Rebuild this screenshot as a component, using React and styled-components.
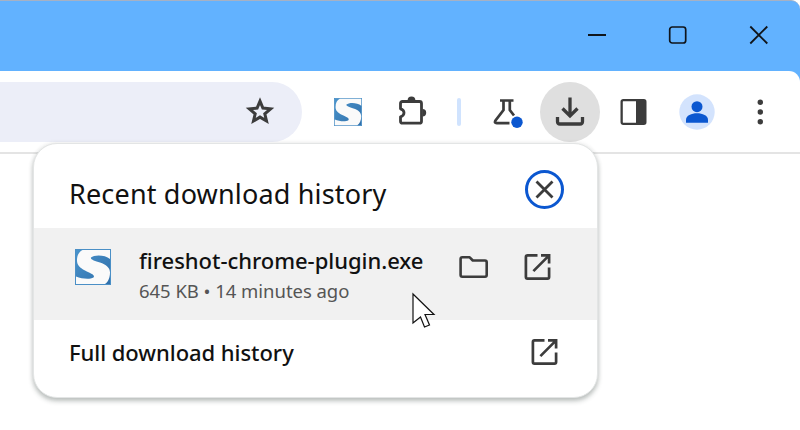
import React from "react";
import styled, { createGlobalStyle } from "styled-components";

const GlobalStyle = createGlobalStyle`
  * { box-sizing: border-box; }
  body { margin: 0; background: #fff; overflow: hidden; }
`;

const Window = styled.div`
  position: relative;
  width: 800px;
  height: 430px;
  overflow: hidden;
  background: #fff;
  font-family: "Noto Sans", "Open Sans", sans-serif;
  color: #111;
`;

const Chrome = styled.div`
  height: 154px;
  background: #62b2ff;
  border-top: 1px solid #a6b1c4;
  border-top-right-radius: 9px;
`;

const TitleBar = styled.div`
  height: 70px;
  display: flex;
  justify-content: flex-end;
  gap: 21px;
  padding: 4px 11px 0 0;
`;

const CaptionButton = styled.div`
  width: 60px;
  height: 60px;
  display: flex;
  align-items: center;
  justify-content: center;
`;

const Toolbar = styled.div`
  height: 83px;
  display: flex;
  align-items: flex-start;
  padding-top: 11px;
  background: #fff;
  border-bottom: 2px solid #e4e4e4;
  border-top-right-radius: 11px;
`;

const AddressBar = styled.div`
  width: 302px;
  height: 60px;
  display: flex;
  align-items: center;
  justify-content: flex-end;
  padding-right: 12px;
  margin-right: 16px;
  border-radius: 0 30px 30px 0;
  background: #eceef8;
`;

const ToolSlot = styled.div`
  width: 60px;
  height: 60px;
  margin-right: ${(p) => p.$gap ?? 3}px;
  border-radius: 50%;
  background: ${(p) => (p.$active ? "#dfdfdf" : "transparent")};
  display: flex;
  align-items: center;
  justify-content: center;
  flex: none;
`;

const Divider = styled.div`
  width: 4px;
  height: 28px;
  margin: 16px 16px 0 0;
  border-radius: 2px;
  background: #d0e3fe;
`;

const Bubble = styled.section`
  position: absolute;
  left: 33px;
  top: 143px;
  width: 565px;
  height: 255px;
  border-radius: 24px;
  border: 1px solid #e3e5e5;
  background: #fff;
  box-shadow: 0 3px 5px rgba(50, 65, 60, 0.32), 0 0 5px rgba(50, 60, 60, 0.09);
`;

const BubbleHeader = styled.header`
  height: 84px;
  display: flex;
  align-items: center;
  justify-content: space-between;
  padding: 7px 33px 0 35px;
`;

const Title = styled.h1`
  margin: 9px 0 0;
  font-size: 27px;
  line-height: 36px;
  font-weight: 450;
  letter-spacing: ${(p) => p.$tracking}px;
  white-space: nowrap;
`;

const CloseButton = styled.div`
  width: 39px;
  height: 39px;
  border: 3.5px solid #0b57d0;
  border-radius: 50%;
  display: flex;
  align-items: center;
  justify-content: center;
`;

const DownloadRow = styled.div`
  height: 92px;
  display: flex;
  align-items: flex-start;
  background: #f1f1f1;
  padding: 17px 39px 0 41px;
`;

const FileIcon = styled.div`
  margin-top: 4px;
  width: 36px;
  height: 36px;
`;

const FileInfo = styled.div`
  margin-left: 28px;
  flex: 1;
  white-space: nowrap;
`;

const FileName = styled.div`
  font-size: 22px;
  line-height: 30px;
  font-weight: 500;
  letter-spacing: ${(p) => p.$tracking}px;
`;

const FileMeta = styled.div`
  margin-top: 1px;
  font-size: 18.5px;
  line-height: 30px;
  color: #555;
  letter-spacing: ${(p) => p.$tracking}px;
`;

const RowActions = styled.div`
  display: flex;
  gap: 24px;
  padding-top: 2px;
`;

const HistoryLink = styled.div`
  height: 64px;
  display: flex;
  align-items: center;
  justify-content: space-between;
  padding: 0 32px 0 35px;
`;

const Pointer = styled.div`
  position: absolute;
  left: 412px;
  top: 292px;
  width: 24px;
  height: 38px;
`;

const Glyph = styled.svg`
  display: block;
  overflow: visible;
  fill: none;
  stroke: ${(p) => p.$stroke ?? "#3c3c3c"};
  stroke-width: ${(p) => p.$weight ?? 3};
`;

function ShotLogo({ size }) {
  return (
    <svg width={size} height={size} viewBox="0 0 36 36" display="block">
      <defs>
        <linearGradient id="shot" x1="0" y1="0" x2="1" y2="1">
          <stop offset="0" stopColor="#4a94cc" />
          <stop offset="1" stopColor="#2f6ea9" />
        </linearGradient>
      </defs>
      <rect x=".5" y=".5" width="35" height="35" fill="url(#shot)" stroke="#4a8fc6" />
      <path
        d="M7.500 1H35V10C30 5.500 19 5.500 16 8.500C15 10.500 20 12 25 13.500C31 15.500 35 18.500 35 23.500C35 29 33 33 30 35H1V27.500C7 30 15 30.500 18.500 28.500C20.500 26 16 24.500 10 21.500C4.500 18.500 2 16 2 11.500C2 6 4 3 7.500 1Z"
        fill="#fafafa"
      />
    </svg>
  );
}

const StarIcon = () => (
  <Glyph width="30" height="30" viewBox="0 0 30 30" $weight={3}>
    <path d="M15 4.200L17.900 11.100L25.600 11.800L19.800 16.800L21.500 24L15 20.100L8.500 24L10.200 16.800L4.400 11.800L12.100 11.100Z" />
  </Glyph>
);

const PuzzleIcon = () => (
  <Glyph width="32" height="32" viewBox="0 0 32 32" $weight={2.8}>
    <path d="M6.500 5.500H23.500Q25.500 5.500 25.500 7.500V25.200Q25.500 27.200 23.500 27.200H6.500Q4.500 27.200 4.500 25.200V20.800Q8 19.800 8 16.800T4.500 12.800V7.500Q4.500 5.500 6.500 5.500Z" strokeLinejoin="round" />
    <path d="M11.600 4.500A3.900 3.900 0 0 1 19.400 4.500ZM26.500 13A3.700 3.700 0 0 1 26.500 20.400Z" fill="#3c3c3c" stroke="none" />
  </Glyph>
);

const FlaskIcon = () => (
  <Glyph width="32" height="32" viewBox="0 0 32 32" $weight={2.7}>
    <path d="M9 4.500H22.500M12.500 5V14L4.500 24.500Q3 27.200 5.700 27.200H18.500M18.800 5V14L23 19.500" />
    <circle cx="26" cy="26.300" r="5.700" fill="#0b57d0" stroke="none" />
  </Glyph>
);

const DownloadIcon = () => (
  <Glyph width="30" height="30" viewBox="0 0 30 30" $weight={3.3}>
    <path d="M15 .5V18.500M7.500 11.500L15 19L22.500 11.500M2.500 20V24.500Q2.500 27 5 27H25Q27.500 27 27.500 24.500V20" />
  </Glyph>
);

const PanelIcon = () => (
  <Glyph width="26" height="26" viewBox="0 0 26 26" $weight={2.3}>
    <rect x="1.650" y="1.150" width="23.700" height="23.700" rx="1.500" />
    <path d="M16 1H25V25H16Z" fill="#3c3c3c" stroke="none" />
  </Glyph>
);

const ProfileIcon = () => (
  <Glyph width="36" height="36" viewBox="0 0 36 36" $stroke="none">
    <circle cx="18" cy="18" r="17.700" fill="#d3e3fd" />
    <circle cx="18" cy="12.700" r="5.500" fill="#0b57d0" />
    <path d="M7 28.700V25.500C7 21.500 12.500 19.200 18 19.200S29 21.500 29 25.500V28.700Z" fill="#0b57d0" />
  </Glyph>
);

const MenuIcon = () => (
  <Glyph width="8" height="26" viewBox="0 0 8 26" $stroke="none">
    {[3.300, 13, 22.700].map((y) => (
      <circle key={y} cx="4.300" cy={y} r="2.700" fill="#3c3c3c" />
    ))}
  </Glyph>
);

const FolderIcon = () => (
  <Glyph width="40" height="40" viewBox="0 0 40 40" $weight={2.6}>
    <path d="M8.300 10.300H15.700L18.800 13.500H31Q32.700 13.500 32.700 15.200V28Q32.700 29.700 31 29.700H8.300Q6.600 29.700 6.600 28V12Q6.600 10.300 8.300 10.300Z" strokeLinejoin="round" />
  </Glyph>
);

const OpenIcon = () => (
  <Glyph width="40" height="40" viewBox="0 0 40 40" $weight={2.7}>
    <path d="M19.500 8.400H9.500Q7.900 8.400 7.900 10V30Q7.900 31.600 9.500 31.600H29.500Q31.100 31.600 31.100 30V20.500" />
    <path d="M23 8.400H31.100V16.500M31.100 8.400L15.400 24.100" />
  </Glyph>
);

export default function App() {
  return (
    <Window>
      <GlobalStyle />
      <Chrome>
        <TitleBar>
          <CaptionButton>
            <Glyph width="18" height="18" $stroke="#10151b" $weight={2}><path d="M0 9H18" /></Glyph>
          </CaptionButton>
          <CaptionButton>
            <Glyph width="18" height="18" $stroke="#10151b" $weight={1.7}><rect x=".7" y="1" width="16" height="16" rx="2.500" /></Glyph>
          </CaptionButton>
          <CaptionButton>
            <Glyph width="18" height="18" $stroke="#10151b" $weight={1.8}><path d="M.3 .5L17.300 17.500M17.300 .5L.3 17.500" /></Glyph>
          </CaptionButton>
        </TitleBar>
        <Toolbar>
          <AddressBar>
            <ToolSlot $gap={0}><StarIcon /></ToolSlot>
          </AddressBar>
          <ToolSlot $gap={4}><ShotLogo size={28} /></ToolSlot>
          <ToolSlot $gap={15}><PuzzleIcon /></ToolSlot>
          <Divider />
          <ToolSlot><FlaskIcon /></ToolSlot>
          <ToolSlot $active><DownloadIcon /></ToolSlot>
          <ToolSlot $gap={4}><PanelIcon /></ToolSlot>
          <ToolSlot><ProfileIcon /></ToolSlot>
          <ToolSlot $gap={0}><MenuIcon /></ToolSlot>
        </Toolbar>
      </Chrome>

      <Bubble>
        <BubbleHeader>
          <Title $tracking={0.17}>Recent download history</Title>
          <CloseButton>
            <Glyph width="17" height="17" $weight={2.8}><path d="M.5 .5L16.500 16.500M16.500 .5L.5 16.500" /></Glyph>
          </CloseButton>
        </BubbleHeader>
        <DownloadRow>
          <FileIcon><ShotLogo size={36} /></FileIcon>
          <FileInfo>
            <FileName $tracking={-0.03}>fireshot-chrome-plugin.exe</FileName>
            <FileMeta $tracking={-0.04}>645 KB • 14 minutes ago</FileMeta>
          </FileInfo>
          <RowActions>
            <FolderIcon />
            <OpenIcon />
          </RowActions>
        </DownloadRow>
        <HistoryLink>
          <FileName as="span" $tracking={-0.05}>Full download history</FileName>
          <OpenIcon />
        </HistoryLink>
      </Bubble>

      <Pointer>
        <Glyph width="24" height="38" $stroke="#111" $weight={1.2}>
          <path d="M1 2L22 22.500H13L17.500 33L12.500 35L8.500 25L1 31Z" fill="#fff" />
        </Glyph>
      </Pointer>
    </Window>
  );
}
